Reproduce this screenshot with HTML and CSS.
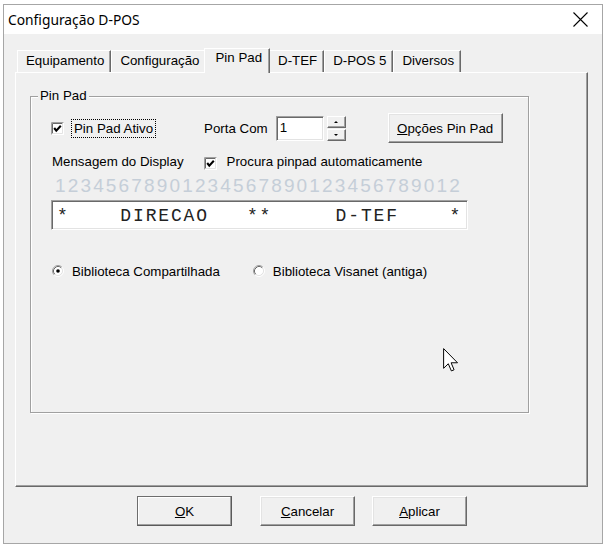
FILE: index.html
```html
<!DOCTYPE html>
<html lang="pt">
<head>
<meta charset="utf-8">
<title>Configuração D-POS</title>
<link rel="stylesheet" href="styles.css">
</head>
<body>
<div class="window">
  <div class="titlebar">
    <span class="title">Configuração D-POS</span>
    <svg class="close" width="15" height="15" viewBox="0 0 15 15"><path d="M0.5 0.5L14.5 14.5M14.5 0.5L0.5 14.5" stroke="#000" stroke-width="1.1" fill="none"/></svg>
  </div>
  <div class="client">
    <div class="tabs">
      <div class="tab">Equipamento</div>
      <div class="tab">Configuração</div>
      <div class="tab tab-active">Pin Pad</div>
      <div class="tab">D-TEF</div>
      <div class="tab">D-POS 5</div>
      <div class="tab">Diversos</div>
    </div>
    <div class="panel">
      <div class="group">
        <div class="group-title">Pin Pad</div>
        <div class="row row-top">
          <svg class="check" width="13" height="13" viewBox="0 0 13 13">
            <rect width="13" height="13" fill="#fff"/>
            <path d="M0.5 12.5V0.5H12.5" stroke="#a0a0a0" fill="none"/>
            <path d="M1.5 11.5V1.5H11.5" stroke="#696969" fill="none"/>
            <path d="M1.5 11.5H11.5V1.5" stroke="#e3e3e3" fill="none"/>
            <path d="M3.2 6L5.3 8.6L9.8 3.8" stroke="#000" stroke-width="2.1" fill="none"/>
          </svg>
          <span class="focus-label">Pin Pad Ativo</span>
          <span class="porta">Porta Com</span>
          <div class="edit">1</div>
          <div class="spin"><span class="spin-btn spin-up"></span><span class="spin-btn spin-down"></span></div>
          <button class="btn btn-opcoes"><u>O</u>pções Pin Pad</button>
        </div>
        <div class="row row-msg">
          <span class="msg-label">Mensagem do Display</span>
          <svg class="check check-auto" width="13" height="13" viewBox="0 0 13 13">
            <rect width="13" height="13" fill="#fff"/>
            <path d="M0.5 12.5V0.5H12.5" stroke="#a0a0a0" fill="none"/>
            <path d="M1.5 11.5V1.5H11.5" stroke="#696969" fill="none"/>
            <path d="M1.5 11.5H11.5V1.5" stroke="#e3e3e3" fill="none"/>
            <path d="M3.2 6L5.3 8.6L9.8 3.8" stroke="#000" stroke-width="2.1" fill="none"/>
          </svg>
          <span class="auto-label">Procura pinpad automaticamente</span>
        </div>
        <div class="ruler">12345678901234567890123456789012</div>
        <div class="display">*    DIRECAO   **     D-TEF    *</div>
        <div class="row radios">
          <div class="radio-item">
            <svg class="radio" width="12" height="12" viewBox="0 0 12 12">
              <circle cx="6" cy="6" r="4.6" fill="#fff"/>
              <path d="M2.11 9.89A5.5 5.5 0 0 1 9.89 2.11" stroke="#a0a0a0" fill="none"/>
              <path d="M9.89 2.11A5.5 5.5 0 0 1 2.11 9.89" stroke="#fff" fill="none"/>
              <path d="M2.82 9.18A4.5 4.5 0 0 1 9.18 2.82" stroke="#696969" fill="none"/>
              <path d="M9.18 2.82A4.5 4.5 0 0 1 2.82 9.18" stroke="#e3e3e3" fill="none"/>
              <circle cx="6" cy="6" r="1.8" fill="#000"/>
            </svg>
            <span>Biblioteca Compartilhada</span>
          </div>
          <div class="radio-item">
            <svg class="radio" width="12" height="12" viewBox="0 0 12 12">
              <circle cx="6" cy="6" r="4.6" fill="#fff"/>
              <path d="M2.11 9.89A5.5 5.5 0 0 1 9.89 2.11" stroke="#a0a0a0" fill="none"/>
              <path d="M9.89 2.11A5.5 5.5 0 0 1 2.11 9.89" stroke="#fff" fill="none"/>
              <path d="M2.82 9.18A4.5 4.5 0 0 1 9.18 2.82" stroke="#696969" fill="none"/>
              <path d="M9.18 2.82A4.5 4.5 0 0 1 2.82 9.18" stroke="#e3e3e3" fill="none"/>
            </svg>
            <span>Biblioteca Visanet (antiga)</span>
          </div>
        </div>
      </div>
    </div>
    <div class="buttons">
      <button class="btn btn-dialog btn-ok"><u>O</u>K</button>
      <button class="btn btn-dialog"><u>C</u>ancelar</button>
      <button class="btn btn-dialog"><u>A</u>plicar</button>
    </div>
  </div>
  <svg class="cursor" width="16" height="24" viewBox="0 0 13 19.5">
    <path d="M0.5 0.5L0.5 16.5L4.3 12.8L6.8 18.6L9 17.7L6.6 12L11.8 12Z" fill="#fff" stroke="#000" stroke-width="0.8" stroke-linejoin="miter"/>
  </svg>
</div>
</body>
</html>
```

FILE: styles.css
```css
* {
  box-sizing: border-box;
}

html, body {
  margin: 0;
  padding: 0;
  background: #ffffff;
}

body {
  font-family: "Liberation Sans", Arial, sans-serif;
  font-size: 13.3px;
  color: #000;
  width: 606px;
  height: 547px;
  overflow: hidden;
}

.window {
  position: relative;
  margin: 4px 0 0 3px;
  width: 600px;
  height: 540px;
  border: 1px solid #a6a6a6;
  background: #f0f0f0;
  display: flex;
  flex-direction: column;
}

.titlebar {
  height: 29px;
  background: #ffffff;
  display: flex;
  align-items: center;
  justify-content: space-between;
  padding: 0 14px 0 4px;
  flex: none;
}

.title {
  font-family: "Noto Sans", "Open Sans", sans-serif;
  font-size: 13.8px;
  line-height: 18px;
  color: #000;
}

.close {
  display: block;
}

.client {
  flex: 1;
  padding: 14px 14px 0 11px;
  display: flex;
  flex-direction: column;
}

.tabs {
  display: flex;
  align-items: flex-end;
  height: 24px;
  padding-left: 2px;
}

.tab {
  height: 22px;
  line-height: 19px;
  padding: 0 6px 0 8px;
  border-top: 1px solid #ffffff;
  border-left: 1px solid #ffffff;
  border-right: 1px solid #696969;
  box-shadow: inset -1px 0 0 #a0a0a0;
  white-space: nowrap;
}

.tab-active {
  position: relative;
  z-index: 1;
  height: 25px;
  margin: 0 -1px -1px -2px;
  padding: 0 7px 0 10px;
  background: #f0f0f0;
  line-height: 18px;
}

.tab-active + .tab {
  border-left-color: transparent;
}

.panel {
  height: 415px;
  border-top: 1px solid #ffffff;
  border-left: 1px solid #ffffff;
  border-right: 1px solid #696969;
  border-bottom: 1px solid #696969;
  box-shadow: inset -1px -1px 0 #a0a0a0;
  padding: 23px 0 0 14px;
}

.group {
  width: 499px;
  height: 317px;
  border: 1px solid #a0a0a0;
  box-shadow: inset 1px 1px 0 #ffffff, 1px 1px 0 #ffffff;
  padding: 0 0 0 20px;
}

.group-title {
  width: fit-content;
  margin: -9px 0 0 -13px;
  padding: 0 2px;
  line-height: 15px;
  background: #f0f0f0;
}

.row {
  display: flex;
  align-items: center;
}

.row-top {
  margin-top: 10px;
  height: 30px;
}

.check {
  display: block;
  flex: none;
}

.focus-label {
  margin-left: 8px;
  padding: 0 2px;
  line-height: 17px;
  outline: 1px dotted #000;
  outline-offset: 0;
}

.porta {
  margin-left: 49px;
}

.edit {
  margin-left: 8px;
  width: 48px;
  height: 25px;
  background: #ffffff;
  border: 1px solid;
  border-color: #a0a0a0 #ffffff #ffffff #a0a0a0;
  box-shadow: inset 1px 1px 0 #696969, inset -1px -1px 0 #e3e3e3;
  padding: 0 0 0 3px;
  line-height: 22px;
}

.spin {
  margin-left: 3px;
  width: 19px;
  height: 25px;
  display: flex;
  flex-direction: column;
  gap: 1px;
}

.spin-btn {
  flex: 1;
  display: flex;
  align-items: center;
  justify-content: center;
  background: #f0f0f0;
  border: 1px solid;
  border-color: #ffffff #696969 #696969 #ffffff;
  box-shadow: inset -1px -1px 0 #a0a0a0;
}

.spin-up::after {
  content: "";
  border-left: 2px solid transparent;
  border-right: 2px solid transparent;
  border-bottom: 2px solid #000;
}

.spin-down::after {
  content: "";
  border-left: 2px solid transparent;
  border-right: 2px solid transparent;
  border-top: 2px solid #000;
}

.btn {
  font-family: "Liberation Sans", Arial, sans-serif;
  font-size: 13.3px;
  color: #000;
  background: #f0f0f0;
  height: 30px;
  padding: 0;
  border: 1px solid;
  border-color: #ffffff #696969 #696969 #ffffff;
  box-shadow: inset -1px -1px 0 #a0a0a0, inset 1px 1px 0 #e3e3e3;
  border-radius: 0;
}

.btn-opcoes {
  margin-left: 42px;
  width: 115px;
}

.row-msg {
  margin-top: 8px;
  height: 20px;
}

.msg-label {
  margin-left: 1px;
  line-height: 15px;
}

.check-auto {
  margin-left: 20px;
  margin-top: 4px;
}

.auto-label {
  margin-left: 10px;
  line-height: 15px;
}

.ruler {
  margin: 5px 0 0 4px;
  font-family: "Liberation Sans", Arial, sans-serif;
  font-size: 19px;
  line-height: 20px;
  letter-spacing: 2.15px;
  color: #c5ced8;
  white-space: nowrap;
}

.display {
  margin-top: 4px;
  width: 417px;
  height: 30px;
  background: #ffffff;
  border: 1px solid;
  border-color: #a0a0a0 #ffffff #ffffff #a0a0a0;
  box-shadow: inset 1px 1px 0 #696969, inset -1px -1px 0 #e3e3e3;
  padding: 2px 0 0 5px;
  font-family: "Liberation Mono", "Courier New", monospace;
  font-size: 18px;
  line-height: 26px;
  letter-spacing: 1.86px;
  white-space: pre;
  color: #222;
}

.radios {
  margin-top: 33px;
  height: 16px;
  gap: 32px;
}

.radio-item {
  display: flex;
  align-items: center;
  gap: 8px;
  padding-left: 1px;
}

.radio {
  display: block;
  flex: none;
}

.buttons {
  display: flex;
  gap: 17px;
  margin-top: 9px;
  padding-left: 122px;
}

.btn-dialog {
  width: 95px;
}

.btn-ok {
  margin-right: 11px;
  border-color: #6d6d6d #5a5a5a #5a5a5a #6d6d6d;
  box-shadow: inset -1px -1px 0 #a0a0a0, inset 1px 1px 0 #ffffff;
}

.cursor {
  position: absolute;
  left: 439px;
  top: 343px;
  display: block;
}
```
